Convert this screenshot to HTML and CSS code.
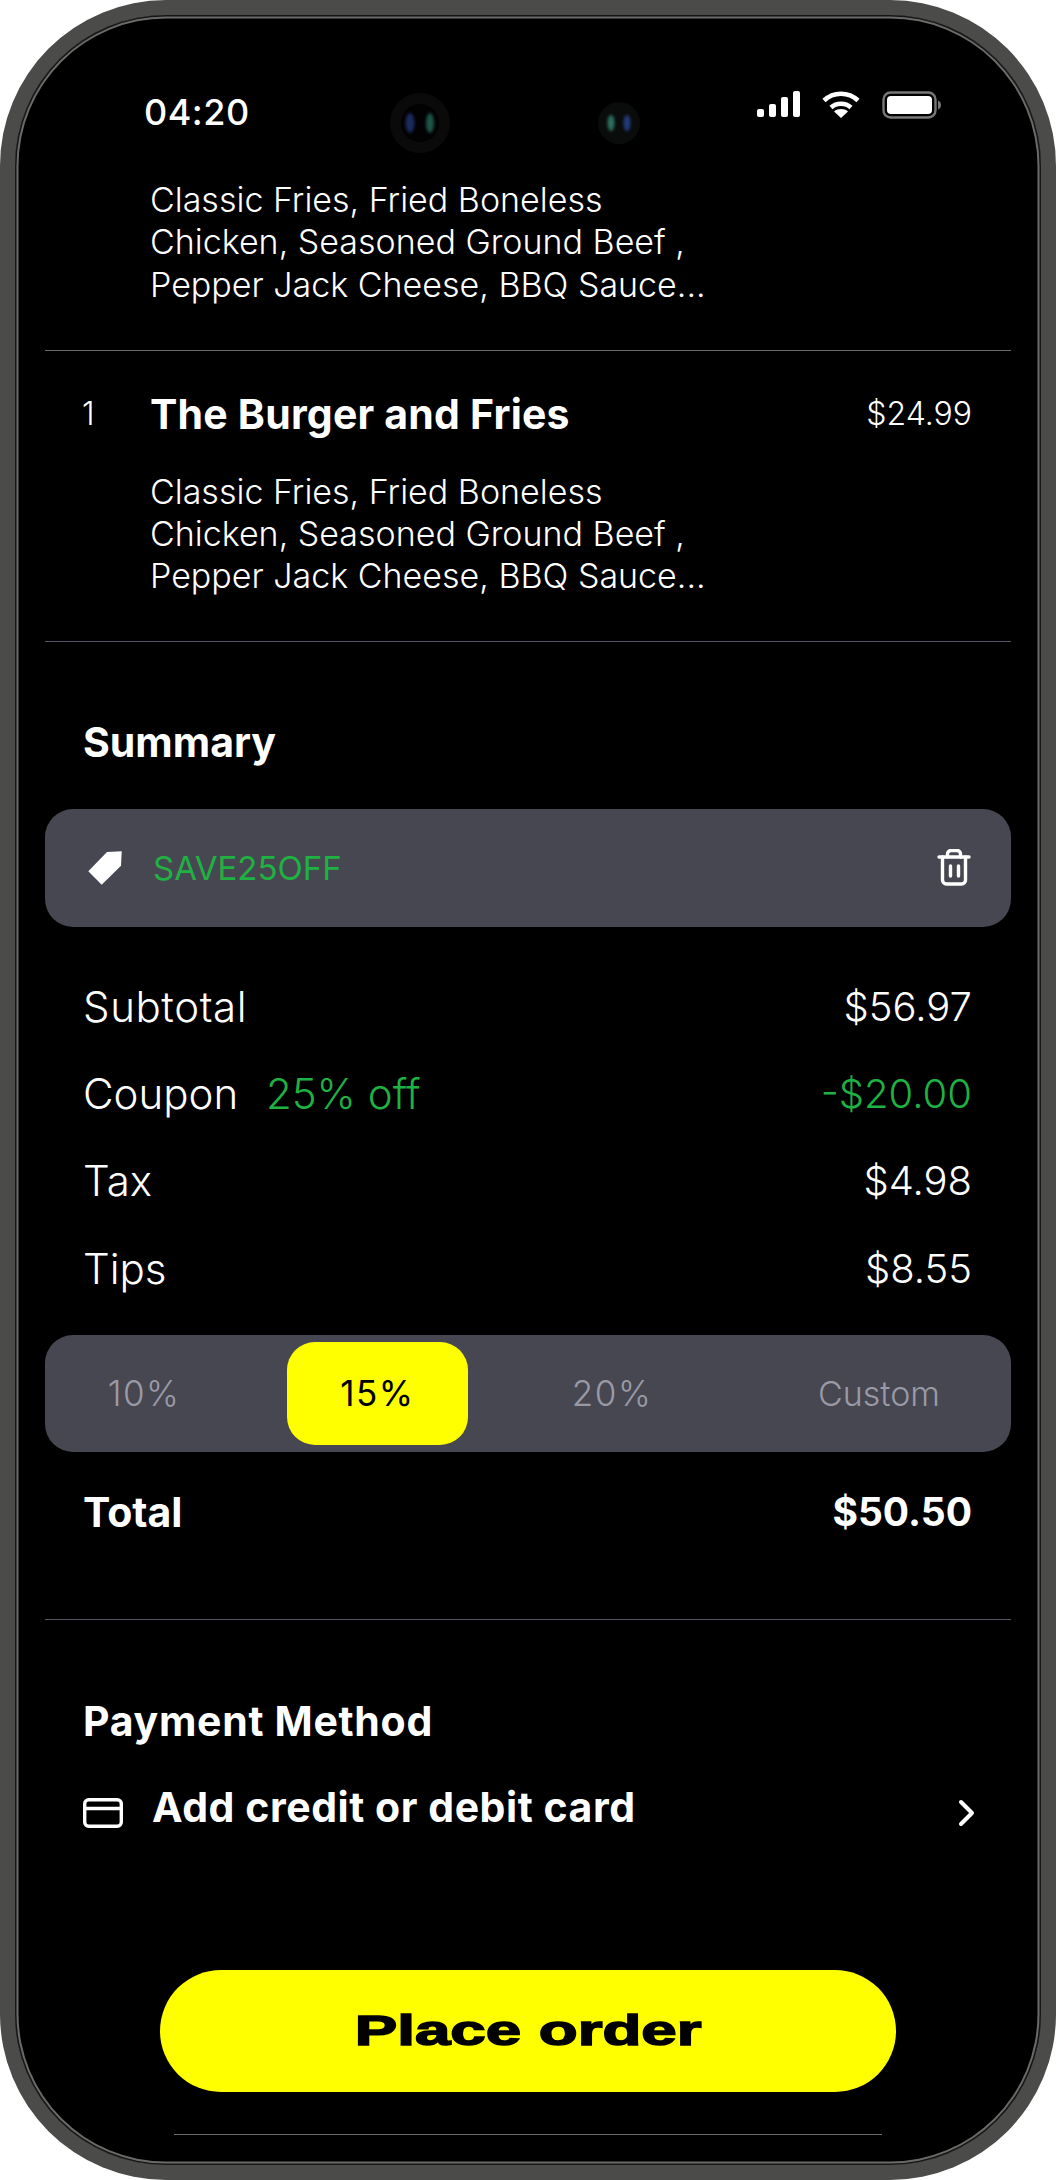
FILE: index.html
```html
<!DOCTYPE html>
<html lang="en">
<head>
<meta charset="utf-8">
<title>Checkout</title>
<link rel="stylesheet" href="styles.css">
</head>
<body>
<div class="phone">
  <div class="screen">
    <header class="status">
      <span class="time">04:20</span>
      <svg class="cam cam-a" viewBox="0 0 60 60" width="60" height="60"><circle cx="30" cy="30" r="30" fill="#090a09"/><circle cx="30" cy="30" r="19" fill="#020203"/><ellipse class="lens" cx="20" cy="30" rx="4.500" ry="10" fill="#1b2a5c"/><ellipse class="lens" cx="40" cy="30" rx="4" ry="10" fill="#1d5546"/></svg>
      <svg class="cam cam-b" viewBox="0 0 42 42" width="42" height="42"><circle cx="21" cy="21" r="21" fill="#0a0c0b"/><ellipse class="lens" cx="13" cy="21" rx="3.500" ry="8" fill="#2b6f5d"/><ellipse class="lens" cx="29" cy="21" rx="3.500" ry="8" fill="#233a7c"/></svg>
      <div class="status-icons">
        <svg viewBox="0 0 43 26" width="43" height="26" fill="#fff"><rect x="0" y="18" width="7" height="8" rx="2"/><rect x="12" y="13" width="7" height="13" rx="2"/><rect x="24" y="6" width="7" height="20" rx="2"/><rect x="36" y="0" width="7" height="26" rx="2"/></svg>
        <svg viewBox="0 0 38 27" width="38" height="27" fill="none" stroke="#fff" stroke-width="4.600"><path d="M2 9.500C11.500 .5 26.500 .5 36 9.500"/><path d="M9 16.500c5.500-5 14.500-5 20 0"/><path d="M19 27l-7-6.600c4-3.200 10-3.200 14 0z" fill="#fff" stroke="none"/></svg>
        <svg viewBox="0 0 59 28" width="59" height="28"><rect x="1.500" y="1.500" width="52" height="25" rx="7" fill="none" stroke="#77777a" stroke-width="2.400"/><rect x="5" y="5" width="45" height="18" rx="4" fill="#fff"/><path d="M56 9.500c2 .5 3 2.500 3 4.500s-1 4-3 4.500z" fill="#77777a"/></svg>
      </div>
    </header>

    <p class="desc">Classic Fries, Fried Boneless<br>Chicken, Seasoned Ground Beef ,<br>Pepper Jack Cheese, BBQ Sauce...</p>
    <hr class="rule rule-first">

    <section class="item">
      <div class="item-head">
        <span class="qty">1</span>
        <span class="item-name">The Burger and Fries</span>
        <span class="price">$24.99</span>
      </div>
      <p class="desc desc-item">Classic Fries, Fried Boneless<br>Chicken, Seasoned Ground Beef ,<br>Pepper Jack Cheese, BBQ Sauce...</p>
    </section>
    <hr class="rule rule-item">

    <h2 class="heading heading-summary">Summary</h2>
    <div class="bar coupon-bar">
      <svg class="tag" viewBox="0 0 34 34" width="34" height="34"><path d="M19 1L33.700 .3 33 14.700 13.700 33.700 .3 20.300z" fill="#fff"/></svg>
      <span class="coupon-code">SAVE25OFF</span>
      <svg class="trash" viewBox="0 0 34 37" width="34" height="37" fill="none" stroke="#fff" stroke-width="3.400" stroke-linecap="round" stroke-linejoin="round"><path d="M2 8h30"/><path d="M10.500 8V5a3.500 3.500 0 0 1 3.500-3.500h6A3.500 3.500 0 0 1 23.500 5v3"/><path d="M5.500 8v23a4 4 0 0 0 4 4h15a4 4 0 0 0 4-4V8"/><path d="M13.500 17v10M21.500 17v10"/></svg>
    </div>

    <div class="rows">
      <div class="row"><span class="label label-wide">Subtotal</span><span>$56.97</span></div>
      <div class="row"><span class="label">Coupon <span class="green off">25% off</span></span><span class="green">-$20.00</span></div>
      <div class="row"><span class="label">Tax</span><span>$4.98</span></div>
      <div class="row"><span class="label">Tips</span><span>$8.55</span></div>
    </div>

    <div class="bar tips">
      <span class="tip tip-pct">10%</span>
      <span class="tip tip-pct tip-on">15%</span>
      <span class="tip tip-pct">20%</span>
      <span class="tip">Custom</span>
    </div>

    <div class="row row-total"><span class="total-label">Total</span><span>$50.50</span></div>
    <hr class="rule rule-total">

    <h2 class="heading heading-pay">Payment Method</h2>
    <div class="pay">
      <svg class="card" viewBox="0 0 40 30" width="40" height="30" fill="none" stroke="#fff" stroke-width="3.400"><rect x="1.700" y="1.700" width="36.600" height="26.600" rx="4"/><path d="M1.700 10.500h36.600"/></svg>
      <span class="pay-label">Add credit or debit card</span>
      <svg class="chev" viewBox="0 0 18 28" width="18" height="28" fill="none" stroke="#fff" stroke-width="4" stroke-linecap="round" stroke-linejoin="round"><path d="M4 3l11 11L4 25"/></svg>
    </div>

    <div class="order"><span class="order-label">Place order</span></div>
    <div class="home"></div>
  </div>
</div>
</body>
</html>
```

FILE: styles.css
```css
* { box-sizing: border-box; }
html, body { margin: 0; padding: 0; background: #fff; }
body { font-family: "Inter", "Liberation Sans", sans-serif; color: #fff; font-weight: 300; }

.phone {
  width: 1056px;
  height: 2180px;
  padding: 15px;
  background: #4b4b49;
  border-radius: 166px;
}
.screen {
  height: 2150px;
  background: #000;
  border-radius: 151px;
  box-shadow: inset 0 0 0 1.5px #161616, inset 0 0 0 3.5px #6a6a68;
  overflow: hidden;
}

.status {
  position: relative;
  height: 164px;
  display: flex;
  justify-content: space-between;
  align-items: flex-start;
  padding: 76px 100px 0 129px;
}
.time { font-size: 36px; line-height: 40px; font-weight: 500; letter-spacing: .5px; margin-top: 1px; }
.status-icons { display: flex; align-items: flex-start; gap: 22px; }
.cam { position: absolute; }
.cam-a { left: 375px; top: 78px; }
.cam-b { left: 583px; top: 87px; }
.lens { filter: blur(1.5px); }

.desc {
  margin: 0;
  padding-left: 135px;
  font-size: 34px;
  line-height: 42.3px;
}
.desc-item { margin-top: 37px; }

.rule { margin: 0 30px; height: 1px; border: 0; background: #6b6b70; }
.rule-first { margin-top: 44px; }
.rule-item { margin-top: 43px; background: #55556a; }
.rule-total { margin-top: 83px; background: #55556a; }

.item { padding-top: 43px; }
.item-head { display: flex; align-items: center; height: 40px; padding-right: 69px; font-size: 32px; }
.qty { width: 135px; padding-left: 67px; }
.item-name { flex: 1; font-size: 41px; letter-spacing: .2px; font-weight: 700; }

.heading { margin: 0; padding-left: 68px; font-size: 41px; line-height: 48px; font-weight: 700; }
.heading-summary { margin-top: 76px; }
.heading-pay { margin-top: 77px; letter-spacing: .7px; }

.bar { margin: 0 30px; background: #474752; border-radius: 28px; }
.coupon-bar { margin-top: 43px; height: 118px; display: flex; align-items: center; padding: 0 40px 0 43px; }
.coupon-code { flex: 1; margin-left: 31px; font-size: 33px; font-weight: 400; color: #1fb141; }
.green { color: #1fb141; }
.off { margin-left: 16px; }

.rows { margin-top: 56px; display: flex; flex-direction: column; gap: 39.3px; }
.row { display: flex; justify-content: space-between; align-items: center; height: 48px; padding: 0 69px 0 68px; font-size: 40px; line-height: 48px; }
.label { font-size: 42px; }
.label-wide { letter-spacing: .6px; }
.row-total { margin-top: 36px; font-size: 39px; font-weight: 700; }
.total-label { font-size: 41px; }

.tips {
  margin-top: 42px;
  height: 117px;
  padding: 7px 0;
  display: grid;
  grid-template-columns: 198px 181px 200px 246px;
  gap: 44px;
  align-items: stretch;
}
.tip { display: flex; align-items: center; justify-content: center; font-size: 34px; color: #9a9aa6; }
.tip-pct { font-size: 35px; letter-spacing: 1.5px; }
.tip-on { background: #ff0; color: #000; border-radius: 28px; font-weight: 400; }

.pay { margin-top: 38px; height: 48px; display: flex; align-items: center; padding: 0 66px 0 68px; }
.pay-label { flex: 1; margin-left: 29px; font-size: 41px; letter-spacing: .55px; font-weight: 700; }
.card { margin-top: 12px; }
.chev { margin-top: 12px; }

.order {
  margin: 139px 145px 0;
  height: 122px;
  background: #ff0;
  border-radius: 61px;
  display: flex;
  align-items: center;
  justify-content: center;
}
.order-label {
  font-family: "Liberation Sans", sans-serif;
  font-size: 43px;
  font-weight: 700;
  color: #000;
  -webkit-text-stroke: 1.5px #000;
  transform: scaleX(1.48);
}
.home { margin: 42px 159px 0; height: 1px; background: #6a6a6a; }
```
